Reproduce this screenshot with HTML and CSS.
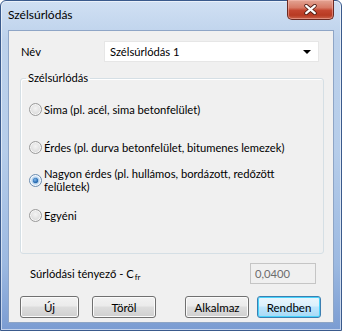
FILE: index.html
```html
<!DOCTYPE html>
<html lang="hu">
<head>
<meta charset="utf-8">
<title>Szélsúrlódás</title>
<link rel="stylesheet" href="styles.css">
</head>
<body>
<div class="window">
  <div class="titlebar">
    <span class="title">Szélsúrlódás</span>
    <button class="close" type="button" aria-label="Bezárás">
      <svg width="13" height="11" viewBox="0 0 13 11">
        <path d="M2.2 1.8 L10.8 9.2 M10.8 1.8 L2.2 9.2" stroke="#4a1a12" stroke-width="3.8" stroke-linecap="round" fill="none"/>
        <path d="M2.2 1.8 L10.8 9.2 M10.8 1.8 L2.2 9.2" stroke="#ffffff" stroke-width="2.2" stroke-linecap="round" fill="none"/>
      </svg>
    </button>
  </div>
  <div class="client">
    <div class="name-row">
      <span class="name-label">Név</span>
      <div class="combo">
        <span class="combo-text">Szélsúrlódás 1</span>
        <span class="combo-arrow"></span>
      </div>
    </div>
    <fieldset class="group">
      <legend class="group-label">Szélsúrlódás</legend>
      <div class="radio-row r1">
        <span class="radio"></span>
        <span class="radio-text">Sima (pl. acél, sima betonfelület)</span>
      </div>
      <div class="radio-row r2">
        <span class="radio"></span>
        <span class="radio-text">Érdes (pl. durva betonfelület, bitumenes lemezek)</span>
      </div>
      <div class="radio-row r3">
        <span class="radio checked"></span>
        <span class="radio-text multi"><span class="line">Nagyon érdes (pl. hullámos, bordázott, redőzött</span><span class="line">felületek)</span></span>
      </div>
      <div class="radio-row r4">
        <span class="radio"></span>
        <span class="radio-text">Egyéni</span>
      </div>
    </fieldset>
    <div class="coef-row">
      <span class="coef-label">Súrlódási tényező - C<sub class="sub">fr</sub></span>
      <div class="coef-input">0,0400</div>
    </div>
    <div class="buttons">
      <div class="btn-group">
        <button class="btn btn-new" type="button">Új</button>
        <button class="btn btn-del" type="button">Töröl</button>
      </div>
      <div class="btn-group right">
        <button class="btn" type="button">Alkalmaz</button>
        <button class="btn default" type="button">Rendben</button>
      </div>
    </div>
  </div>
</div>
</body>
</html>
```

FILE: styles.css
```css
html, body {
  margin: 0;
  padding: 0;
  background: #ffffff;
}

body {
  width: 342px;
  height: 331px;
  overflow: hidden;
  font-family: "Lato", "Open Sans", "DejaVu Sans", sans-serif;
  font-size: 11.2px;
  font-weight: 400;
  line-height: 15px;
  color: #000000;
}

.window {
  box-sizing: border-box;
  width: 342px;
  height: 331px;
  border: 1px solid #3a5a8c;
  border-radius: 6px 6px 0 0;
  padding: 0 7px 7px 7px;
  background: linear-gradient(to bottom, #d0e0f3 0%, #bcd1eb 12%, #b6cdea 45%, #9cb9e1 80%, #7b9cd2 100%);
  box-shadow: inset 0 0 0 1px rgba(255, 255, 255, 0.55);
  display: flex;
  flex-direction: column;
}

.titlebar {
  height: 29px;
  display: flex;
  justify-content: space-between;
  align-items: flex-start;
  flex: none;
}

.title {
  align-self: center;
  font-size: 12px;
  line-height: 16px;
  margin-top: -1px;
  color: #000000;
}

.close {
  -webkit-appearance: none;
  appearance: none;
  width: 47px;
  height: 20px;
  margin-top: -1px;
  padding: 0;
  border: 1px solid #6b2a22;
  border-top: none;
  border-radius: 0 0 5px 5px;
  background: linear-gradient(to bottom, #e3a494 0%, #d77a66 40%, #c3452f 55%, #b83a22 80%, #c9624a 100%);
  box-shadow: inset 0 0 0 1px rgba(255, 200, 190, 0.45);
  display: flex;
  align-items: center;
  justify-content: center;
}

.client {
  flex: 1;
  box-sizing: border-box;
  background: #f0f0f0;
  border: 1px solid #8ea5c6;
  padding: 10px 9px 0 11px;
  display: flex;
  flex-direction: column;
}

.name-row {
  display: flex;
  align-items: center;
  height: 21px;
  flex: none;
}

.name-label {
  width: 84px;
  padding-left: 1px;
  box-sizing: border-box;
}

.combo {
  box-sizing: border-box;
  width: 215px;
  height: 21px;
  background: #ffffff;
  border: 1px solid #e6e6e6;
  display: flex;
  align-items: center;
  justify-content: space-between;
  padding: 0 5px 0 5px;
}

.combo-arrow {
  width: 0;
  height: 0;
  border-left: 4px solid transparent;
  border-right: 4px solid transparent;
  border-top: 4px solid #000000;
  margin-right: 2px;
}

.group {
  display: block;
  margin: 9px 0 0 0;
  width: 304px;
  box-sizing: border-box;
  border: 1px solid #d5dfe5;
  border-radius: 3px;
  padding: 17px 8px 30px 8px;
  min-width: 0;
  box-shadow: inset 1px 1px 0 #ffffff;
  flex: none;
}

.group-label {
  padding: 0 2px;
  margin-left: -3px;
  line-height: 14px;
}

.radio-row {
  display: flex;
  align-items: center;
  height: 15px;
}

.radio-row.r1 {
  margin-bottom: 23px;
}

.radio-row.r2 {
  margin-bottom: 12px;
}

.radio-row.r3 {
  height: 26px;
  margin-bottom: 15px;
}

.radio {
  box-sizing: border-box;
  width: 13px;
  height: 13px;
  border-radius: 50%;
  border: 1px solid #9a9a9a;
  background: radial-gradient(circle at 50% 40%, #f4f4f4 0%, #e2e2e2 50%, #cfcfcf 100%);
  box-shadow: inset 0 0 0 1px #f7f7f7;
  flex: none;
  margin-right: 2px;
  position: relative;
}

.radio.checked {
  border-color: #6c8db0;
  background: radial-gradient(circle at 50% 50%, #2a69a8 0%, #3e87c9 28%, #9ec3e6 34%, #e0ecf7 60%, #f3f7fb 100%);
  box-shadow: inset 0 0 0 1px #f5f9fd;
}

.radio.checked::after {
  content: "";
  position: absolute;
  left: 3px;
  top: 3px;
  width: 5px;
  height: 5px;
  border-radius: 50%;
  background: radial-gradient(circle at 40% 35%, #7fb5ea 0%, #2d6fb3 60%, #1b4f8c 100%);
}

.radio-text {
  white-space: nowrap;
}

.radio-text.multi {
  display: flex;
  flex-direction: column;
  line-height: 13px;
}

.line {
  display: block;
  height: 13px;
}

.coef-row {
  display: flex;
  align-items: center;
  justify-content: space-between;
  margin-top: 9px;
  padding-left: 10px;
  padding-right: 8px;
  height: 21px;
  flex: none;
}

.sub {
  font-size: 8px;
  line-height: 8px;
  vertical-align: -2px;
  margin-left: 1px;
}

.coef-input {
  box-sizing: border-box;
  width: 66px;
  height: 21px;
  border: 1px solid #c5c5c5;
  background: #f0f0f0;
  color: #6d6d6d;
  line-height: 19px;
  padding-left: 4px;
}

.buttons {
  display: flex;
  justify-content: space-between;
  margin-top: 12px;
  padding-right: 3px;
  flex: none;
}

.btn-group {
  display: flex;
}

.btn-group.right {
  gap: 8px;
}

.btn {
  -webkit-appearance: none;
  appearance: none;
  box-sizing: border-box;
  width: 64px;
  height: 22px;
  margin: 0;
  padding: 0;
  border: 1px solid #707070;
  border-radius: 3px;
  background: linear-gradient(to bottom, #f2f2f2 0%, #ebebeb 45%, #dddddd 50%, #cfcfcf 100%);
  box-shadow: inset 0 0 0 1px #fbfbfb;
  font-family: "Lato", "Open Sans", sans-serif;
  font-size: 11.5px;
  font-weight: 400;
  color: #000000;
}

.btn-new {
  width: 59px;
  margin-right: 13px;
}

.btn.default {
  border-color: #3c7fb1;
  background: linear-gradient(to bottom, #eaf6fd 0%, #d9f0fc 45%, #bee6fd 50%, #a7d9f5 100%);
  box-shadow: inset 0 0 0 1px #48d3fb;
}
```
